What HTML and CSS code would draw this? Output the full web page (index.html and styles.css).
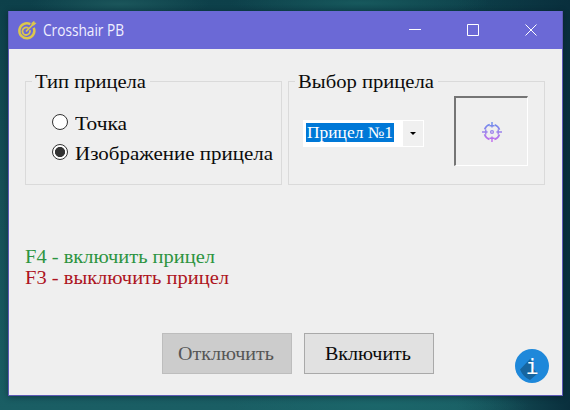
FILE: index.html
```html
<!DOCTYPE html>
<html lang="ru">
<head>
<meta charset="utf-8">
<title>Crosshair PB</title>
<link rel="stylesheet" href="styles.css">
</head>
<body>
<main class="window">
  <header class="titlebar">
    <svg class="app-icon" width="20" height="20" viewBox="0 0 20 20" fill="none" stroke="#dcc74c">
      <path d="M13.3 4.1A7.5 7.5 0 1 0 16.7 7.7" stroke-width="2.5"/>
      <path d="M11.3 8A3.8 3.8 0 1 0 12.9 10.2" stroke-width="1.8"/>
      <path d="M9 11.5L16 4.5" stroke-width="1.7"/>
      <path d="M14.5 5.5V3L17.2.8L17.6 2.6L19.5 3L17 5.5Z" fill="#dcc74c" stroke="none"/>
    </svg>
    <svg class="title" width="90" height="26"><text x="0" y="19" textLength="81" lengthAdjust="spacingAndGlyphs">Crosshair PB</text></svg>
    <div class="controls">
      <svg width="12" height="12" viewBox="0 0 12 12"><path d="M0 5.5H12"/></svg>
      <svg width="12" height="12" viewBox="0 0 12 12"><path d="M.5.5H11.5V11.5H.5Z"/></svg>
      <svg width="12" height="12" viewBox="0 0 12 12"><path d="M.5.5L11.5 11.5M11.5.5L.5 11.5"/></svg>
    </div>
  </header>
  <div class="client">
    <div class="groups">
      <fieldset class="group">
        <legend><svg class="label" width="112" height="24"><text x="0" y="18" textLength="111" lengthAdjust="spacingAndGlyphs">Тип прицела</text></svg></legend>
        <div class="options">
          <div class="option"><i class="radio"></i><svg class="label" width="54" height="24"><text x="0" y="18" textLength="52" lengthAdjust="spacingAndGlyphs">Точка</text></svg></div>
          <div class="option"><i class="radio checked"></i><svg class="label" width="200" height="24"><text x="0" y="18" textLength="198" lengthAdjust="spacingAndGlyphs">Изображение прицела</text></svg></div>
        </div>
      </fieldset>
      <fieldset class="group">
        <legend><svg class="label" width="137" height="24"><text x="0" y="18" textLength="136" lengthAdjust="spacingAndGlyphs">Выбор прицела</text></svg></legend>
        <div class="picker">
          <div class="combo">
            <div class="selected"><svg class="label small" width="88" height="19"><text x="1" y="15" textLength="86" lengthAdjust="spacingAndGlyphs">Прицел №1</text></svg></div>
            <div class="drop"><svg width="6" height="3" viewBox="0 0 6 3"><path d="M0 0H6L3 3Z"/></svg></div>
          </div>
          <div class="preview">
            <svg width="20" height="20" viewBox="0 0 20 20" fill="none" stroke="url(#aim)" stroke-width="1.7">
              <defs><linearGradient id="aim" gradientUnits="userSpaceOnUse" x1="0" y1="0" x2="0" y2="20"><stop offset="0" stop-color="#658dec"/><stop offset=".55" stop-color="#a080eb"/><stop offset="1" stop-color="#c466ed"/></linearGradient></defs>
              <circle cx="10" cy="10" r="7.8" stroke-dasharray="7.25 5" stroke-dashoffset="-2.5"/>
              <path d="M10.01 0L9.99 5.6M10.01 14.4L9.99 20M0 10.01L5.6 9.99M14.4 10.01L20 9.99M7.5 3.8L12.5 3.79M7.5 16.2L12.5 16.19M3.8 7.5L3.79 12.5M16.2 7.5L16.19 12.5" stroke-width="1.4"/>
              <circle cx="10" cy="10" r="1.4" stroke-width="1.3"/>
            </svg>
          </div>
        </div>
      </fieldset>
    </div>
    <div class="hints">
      <svg class="label on" width="192" height="21"><text x="0" y="16" textLength="190" lengthAdjust="spacingAndGlyphs">F4 - включить прицел</text></svg>
      <svg class="label off" width="206" height="21"><text x="0" y="16" textLength="204" lengthAdjust="spacingAndGlyphs">F3 - выключить прицел</text></svg>
    </div>
    <footer class="footer">
      <button class="button" disabled><svg class="label" width="98" height="24"><text x="0" y="18" textLength="96" lengthAdjust="spacingAndGlyphs">Отключить</text></svg></button>
      <button class="button"><svg class="label" width="88" height="24"><text x="0" y="18" textLength="86" lengthAdjust="spacingAndGlyphs">Включить</text></svg></button>
      <svg class="info" width="34" height="34" viewBox="0 0 34 34">
        <circle cx="17" cy="17" r="17" fill="#1e88da"/>
        <path d="M15 10L5 20.5Q8 28 15 31L22 25V24L17 18V11Z" fill="#17659f"/>
        <text x="10.5" y="25">i</text>
      </svg>
    </footer>
  </div>
</main>
</body>
</html>
```

FILE: styles.css
```css
* { box-sizing: border-box; }

body {
  margin: 0;
  height: 410px;
  padding: 11px 7px 14px 8px;
  overflow: hidden;
  background:
    radial-gradient(ellipse 90px 14px at 120px 4px, #1b565b, transparent),
    radial-gradient(ellipse 130px 14px at 360px 3px, #17595d, transparent),
    radial-gradient(ellipse 150px 20px at 380px 406px, #1b666a, transparent),
    linear-gradient(90deg, transparent 80%, #092f3d 100%),
    linear-gradient(#0d404a, #164f56 45%, #1a5e64);
}

svg { display: block; flex: none; }

.window {
  height: 385px;
  display: flex;
  flex-direction: column;
  border: 1px solid #5d59b5;
  border-top: 0;
  background: #efefef;
  box-shadow: 0 1px 6px rgba(0, 15, 30, .45);
}

.titlebar {
  flex: none;
  height: 38px;
  display: flex;
  align-items: center;
  padding: 0 25px 0 8px;
  background: #6b69d6;
}

.title {
  margin-left: 6px;
  font-family: "Open Sans", sans-serif;
  font-size: 16px;
  fill: #f1f0ff;
}

.controls {
  margin-left: auto;
  display: flex;
  gap: 46px;
}

.controls path { fill: none; stroke: #fff; stroke-width: 1; }

.label {
  font-family: "Liberation Serif", serif;
  font-size: 18px;
  fill: #0b0b0b;
}

.label.small { font-size: 16px; fill: #fff; }
.label.on { fill: #2c9440; }
.label.off { fill: #ad1421; }

.client {
  flex: 1;
  display: flex;
  flex-direction: column;
  padding: 21px 13px 12px 16px;
}

.groups {
  display: grid;
  grid-template-columns: 257px 257px;
  gap: 6px;
}

.group {
  min-width: 0;
  height: 115px;
  margin: 0;
  padding: 0;
  border: 1px solid #dadada;
}

.group legend { height: 22px; margin-left: 6px; padding: 0 3px; }

.options { display: grid; gap: 6px; padding: 20px 0 0 26px; }
.option { display: flex; align-items: center; gap: 7px; }

.radio {
  width: 16px;
  height: 16px;
  margin-bottom: 4px;
  border: 1px solid #333;
  border-radius: 50%;
  background: #fff;
}

.radio.checked { background: radial-gradient(circle, #333 4.7px, #fff 5.4px); }

.picker {
  display: flex;
  align-items: flex-start;
  justify-content: space-between;
  padding: 4px 16px 0 14px;
}

.combo {
  display: flex;
  align-items: flex-start;
  justify-content: space-between;
  width: 121px;
  height: 27px;
  margin-top: 24px;
  padding: 1px 1px 1px 3px;
  background: #fff;
}

.selected { margin-top: 2px; background: #0078d7; }

.drop {
  width: 20px;
  height: 25px;
  display: grid;
  place-items: center;
  background: #f0f0f0;
}

.preview {
  width: 74px;
  height: 70px;
  display: grid;
  place-items: center;
  border: 1px solid #fff;
  border-top: 2px solid #757575;
  border-left: 2px solid #757575;
}

.hints { margin-top: 62px; }

.footer {
  display: flex;
  gap: 12px;
  margin: 44px 0 0 137px;
}

.button {
  width: 130px;
  height: 41px;
  display: flex;
  align-items: center;
  justify-content: center;
  padding: 0;
  border: 1px solid #a9a9a9;
  background: #e1e1e1;
}

.button:disabled { border-color: #bdbdbd; background: #ccc; }
.button:disabled .label { fill: #565656; }

.info {
  margin: 16px 0 0 auto;
  font-family: "DejaVu Sans Mono", monospace;
  font-size: 22px;
  fill: #fff;
}
```
